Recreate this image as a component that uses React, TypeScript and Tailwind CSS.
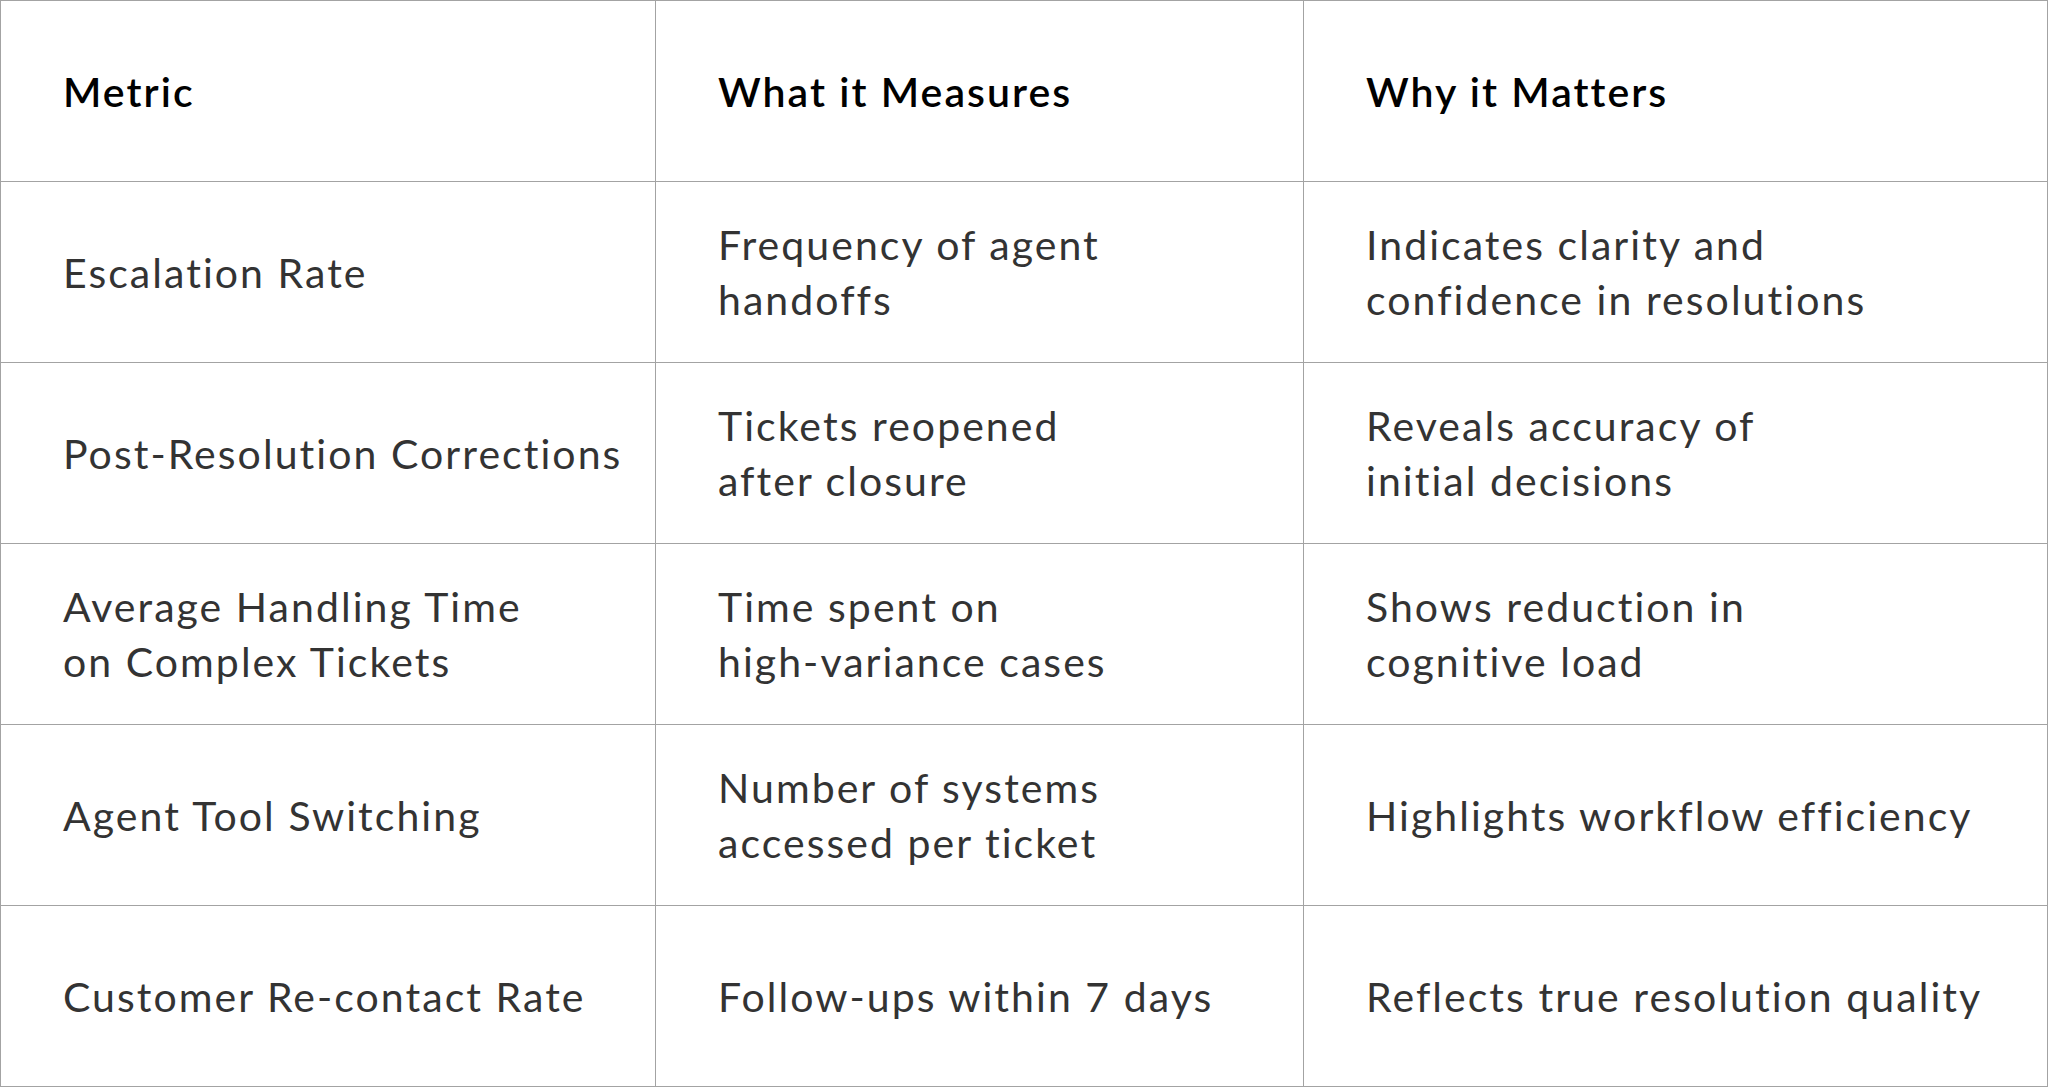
const rows: [string[], string[], string[]][] = [
  [["Escalation Rate"], ["Frequency of agent", "handoffs"], ["Indicates clarity and", "confidence in resolutions"]],
  [["Post-Resolution Corrections"], ["Tickets reopened", "after closure"], ["Reveals accuracy of", "initial decisions"]],
  [["Average Handling Time", "on Complex Tickets"], ["Time spent on", "high-variance cases"], ["Shows reduction in", "cognitive load"]],
  [["Agent Tool Switching"], ["Number of systems", "accessed per ticket"], ["Highlights workflow efficiency"]],
  [["Customer Re-contact Rate"], ["Follow-ups within 7 days"], ["Reflects true resolution quality"]],
];

function Cell({ lines, last, header }: { lines: string[]; last?: boolean; header?: boolean }) {
  return (
    <div
      className={`flex flex-col justify-center pl-[62px] ${last ? "" : "border-r border-[#a3a3a3]"} ${
        header ? "font-semibold text-black" : "text-[#333333]"
      }`}
    >
      {lines.map((l) => (
        <div key={l} className="whitespace-nowrap">
          {l}
        </div>
      ))}
    </div>
  );
}

export default function App() {
  return (
    <div
      className="w-[2048px] h-[1087px] bg-white border border-[#a3a3a3] text-[41px] leading-[55px] tracking-[0.05em]"
      style={{ fontFamily: "Lato, sans-serif" }}
    >
      <div className="grid grid-cols-[655px_648px_1fr] h-[181px] border-b border-[#a3a3a3]">
        <Cell header lines={["Metric"]} />
        <Cell header lines={["What it Measures"]} />
        <Cell header last lines={["Why it Matters"]} />
      </div>
      {rows.map((r, i) => (
        <div
          key={i}
          className={`grid grid-cols-[655px_648px_1fr] ${
            i < rows.length - 1 ? "h-[181px] border-b border-[#a3a3a3]" : "h-[180px]"
          }`}
        >
          <Cell lines={r[0]} />
          <Cell lines={r[1]} />
          <Cell last lines={r[2]} />
        </div>
      ))}
    </div>
  );
}
